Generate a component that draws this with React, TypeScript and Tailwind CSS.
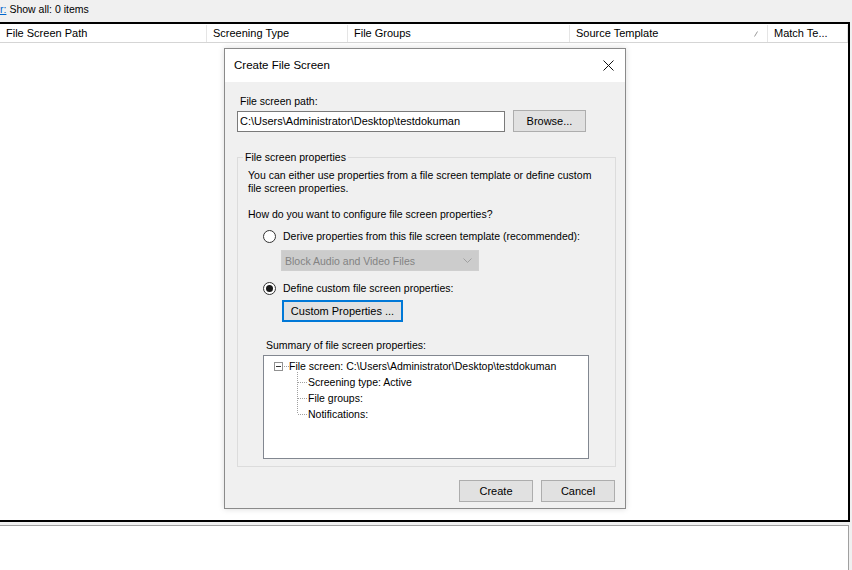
import React from "react";

const font = { fontFamily: '"Liberation Sans", Arial, sans-serif' };

const columns = [
  { label: "File Screen Path", width: "w-[207px]" },
  { label: "Screening Type", width: "w-[141px]" },
  { label: "File Groups", width: "w-[222px]" },
  { label: "Source Template", width: "w-[198px]", sort: true },
  { label: "Match Te...", width: "flex-1" },
];

const Radio = ({ checked }: { checked?: boolean }) => (
  <span className="flex size-[13px] shrink-0 items-center justify-center rounded-full border border-[#333] bg-white">
    {checked && <span className="size-[7px] rounded-full bg-[#1a1a1a]" />}
  </span>
);

const WinButton = ({
  children,
  className = "",
  focused,
}: {
  children: React.ReactNode;
  className?: string;
  focused?: boolean;
}) => (
  <button
    className={
      "flex h-[22px] items-center justify-center bg-[#e1e1e1] text-[11px] text-[#000] " +
      (focused ? "border-2 border-[#0078d7] " : "border border-[#adadad] ") +
      className
    }
  >
    {children}
  </button>
);

const TreeLines = () => (
  <svg className="absolute left-0 top-0" width="60" height="70" shapeRendering="crispEdges">
    <rect x="10.5" y="6.5" width="8" height="8" fill="white" stroke="#919191" />
    <line x1="12" y1="10.5" x2="17" y2="10.5" stroke="#333" />
    <line x1="20" y1="10.5" x2="25" y2="10.5" stroke="#a0a0a0" strokeDasharray="1 1" />
    <line x1="33.5" y1="16" x2="33.5" y2="58" stroke="#a0a0a0" strokeDasharray="1 1" />
    <line x1="34" y1="26.5" x2="43" y2="26.5" stroke="#a0a0a0" strokeDasharray="1 1" />
    <line x1="34" y1="42.5" x2="43" y2="42.5" stroke="#a0a0a0" strokeDasharray="1 1" />
    <line x1="34" y1="58.5" x2="43" y2="58.5" stroke="#a0a0a0" strokeDasharray="1 1" />
  </svg>
);

export default function App() {
  return (
    <div className="relative flex h-[570px] w-[852px] flex-col overflow-hidden bg-[#f0f0f0] text-[11px] text-black" style={font}>
      {/* filter line */}
      <div className="flex h-[22px] shrink-0 items-center pb-[4px] text-[10.5px] leading-none">
        <span className="text-[#0066cc] underline">r:</span>
        <span className="ml-[3px]">Show all: 0 items</span>
      </div>

      {/* list view */}
      <div className="flex h-[500px] w-[850px] shrink-0 flex-col border-b-2 border-r-2 border-t-2 border-black bg-white">
        <div className="flex h-[19px] shrink-0 border-b border-[#d5d5d5] pt-[1px]">
          {columns.map((c) => (
            <div key={c.label} className={"relative flex items-center border-r border-[#e5e5e5] pl-[6px] " + c.width}>
              <span>{c.label}</span>
              {c.sort && (
                <svg className="absolute right-[9px] top-[6px]" width="4" height="6">
                  <line x1="0.5" y1="5.5" x2="3.5" y2="0.5" stroke="#9a9a9a" />
                </svg>
              )}
            </div>
          ))}
        </div>
        <div className="flex-1" />
      </div>

      {/* details pane */}
      <div className="mt-[3px] w-[849px] flex-1 border-r border-t border-[#a0a0a0] bg-white" />

      {/* dialog */}
      <div className="absolute left-[224px] top-[48px] flex h-[461px] w-[402px] flex-col border border-[#8a8a8a] bg-[#f0f0f0] shadow-[0_0_6px_rgba(0,0,0,0.15)]">
        <div className="flex h-[33px] shrink-0 items-center justify-between bg-white pl-[9px] pr-[11px]">
          <span className="text-[11.5px]">Create File Screen</span>
          <svg width="11" height="11" viewBox="0 0 11 11">
            <path d="M0.5 0.5 L10.5 10.5 M10.5 0.5 L0.5 10.5" stroke="#111" strokeWidth="1" />
          </svg>
        </div>

        <div className="flex flex-1 flex-col px-[12px] pt-[12px] text-[10.5px] leading-[14px]">
          <div className="ml-[3px]">File screen path:</div>
          <div className="mt-[2px] flex items-center gap-[8px]">
            <div className="flex h-[21px] w-[268px] items-center border border-[#7a7a7a] bg-white pl-[2px] text-[11px]">
              C:\Users\Administrator\Desktop\testdokuman
            </div>
            <WinButton className="w-[73px]">Browse...</WinButton>
          </div>

          <fieldset className="mt-[18px] h-[317px] w-[379px] border border-[#dcdcdc] pl-[10px]">
            <legend className="ml-[-5px] px-[2px]">File screen properties</legend>
            <p className="mt-[5px] leading-[13px]">
              You can either use properties from a file screen template or define custom
              <br />
              file screen properties.
            </p>
            <p className="mt-[12px]">How do you want to configure file screen properties?</p>

            <div className="ml-[15px] mt-[8px] flex items-center gap-[7px]">
              <Radio />
              <span>Derive properties from this file screen template (recommended):</span>
            </div>
            <div className="ml-[33px] mt-[7px] flex h-[21px] w-[198px] items-center justify-between border border-[#cfcfcf] bg-[#cccccc] pl-[3px] pr-[6px] text-[#838383]">
              <span>Block Audio and Video Files</span>
              <svg width="9" height="5" viewBox="0 0 9 5">
                <path d="M0.5 0.5 L4.5 4.5 L8.5 0.5" fill="none" stroke="#a0a0a0" />
              </svg>
            </div>

            <div className="ml-[15px] mt-[10px] flex items-center gap-[7px]">
              <Radio checked />
              <span>Define custom file screen properties:</span>
            </div>
            <WinButton focused className="ml-[34px] mt-[5px] w-[121px]">
              Custom Properties ...
            </WinButton>

            <div className="ml-[18px] mt-[16px]">Summary of file screen properties:</div>
            <div className="relative ml-[15px] mt-[3px] h-[104px] w-[326px] border border-[#828790] bg-white pt-[2px] text-[10.5px]">
              <TreeLines />
              <div className="flex h-[16px] items-center whitespace-nowrap pl-[25px]">
                File screen: C:\Users\Administrator\Desktop\testdokuman
              </div>
              {["Screening type: Active", "File groups:", "Notifications:"].map((t) => (
                <div key={t} className="flex h-[16px] items-center whitespace-nowrap pl-[44px]">
                  {t}
                </div>
              ))}
            </div>
          </fieldset>

          <div className="mr-[-2px] mt-[13px] flex justify-end gap-[8px]">
            <WinButton className="w-[74px]">Create</WinButton>
            <WinButton className="w-[74px]">Cancel</WinButton>
          </div>
        </div>
      </div>
    </div>
  );
}
